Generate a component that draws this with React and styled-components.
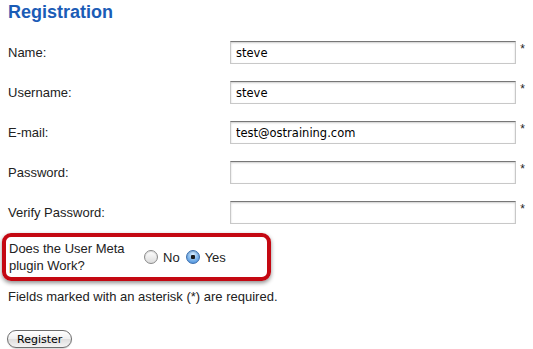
import styled, { createGlobalStyle } from "styled-components";

const Global = createGlobalStyle`
  body {
    margin: 0;
    background: #fff;
    font-family: "Liberation Sans", Arial, sans-serif;
    font-size: 13px;
    color: #222;
  }
`;

const fields = [
  { label: "Name:", value: "steve" },
  { label: "Username:", value: "steve" },
  { label: "E-mail:", value: "test@ostraining.com" },
  { label: "Password:", value: "" },
  { label: "Verify Password:", value: "" },
];

const App = () => {
  return (
    <Page>
      <Global />
      <Title>Registration</Title>
      <Rows>
        {fields.map((f) => (
          <Row key={f.label}>
            <Label>{f.label}</Label>
            <Input type="text" defaultValue={f.value} />
            <Star>*</Star>
          </Row>
        ))}
      </Rows>
      <Highlight>
        <Question>Does the User Meta plugin Work?</Question>
        <Choices>
          <Choice>
            <Radio />
            No
          </Choice>
          <Choice>
            <Radio checked />
            Yes
          </Choice>
        </Choices>
      </Highlight>
      <Note>Fields marked with an asterisk (*) are required.</Note>
      <Button>Register</Button>
    </Page>
  );
};

export default App;

const Page = styled.div`
  width: 533px;
  height: 349px;
  padding: 0 8px;
  box-sizing: border-box;
  overflow: hidden;
`;

const Title = styled.h1`
  margin: 0;
  padding-top: 2px;
  height: 29px;
  font-size: 18px;
  font-weight: bold;
  color: #1b5cb6;
`;

const Rows = styled.div`
  display: flex;
  flex-direction: column;
  margin-top: 1px;
`;

const Row = styled.div`
  display: flex;
  align-items: center;
  height: 40px;
`;

const Label = styled.div`
  width: 222px;
  flex: none;
`;

const Input = styled.input`
  width: 290px;
  height: 23px;
  box-sizing: border-box;
  margin: 0;
  padding: 2px 5px 0;
  border: 1px solid #c8c8c8;
  border-top-color: #777;
  box-shadow: inset 0 1px 2px rgba(0, 0, 0, 0.2);
  font-family: "DejaVu Sans", Verdana, sans-serif;
  font-size: 11.5px;
  color: #000;
  background: #fff;
  outline: none;
`;

const Star = styled.span`
  margin-left: 4px;
  margin-top: -6px;
  font-size: 12px;
  color: #222;
`;

const Highlight = styled.div`
  display: flex;
  align-items: center;
  width: 269px;
  height: 48px;
  margin: 1px 0 0 -6px;
  padding: 0 0 0 3px;
  box-sizing: border-box;
  border: 4px solid #c40812;
  border-radius: 9px;
  box-shadow: 0 2px 4px rgba(0, 0, 0, 0.45);
`;

const Question = styled.div`
  width: 135px;
  flex: none;
  line-height: 17px;
`;

const Choices = styled.div`
  display: flex;
  align-items: center;
  gap: 6px;
`;

const Choice = styled.label`
  display: flex;
  align-items: center;
  gap: 5px;
`;

const Radio = styled.span`
  display: inline-block;
  width: 14px;
  height: 14px;
  box-sizing: border-box;
  border-radius: 50%;
  border: 1px solid ${(p) => (p.checked ? "#3b6fae" : "#8a8a8a")};
  background: ${(p) =>
    p.checked
      ? "radial-gradient(circle, #1a1a1a 0 2px, transparent 2.5px), radial-gradient(circle at 50% 30%, #d6ecff 0, #74aee8 60%, #3a82d6 100%)"
      : "linear-gradient(#ffffff, #dcdcdc)"};
  box-shadow: inset 0 1px 1px rgba(0, 0, 0, 0.15);
`;

const Note = styled.p`
  margin: 8px 0 0;
`;

const Button = styled.button`
  margin-top: 26px;
  margin-left: -1px;
  height: 18px;
  padding: 0 9px;
  border: 1px solid #6e6e6e;
  border-radius: 9px;
  background: linear-gradient(#ffffff, #f0f0f0 50%, #dedede 51%, #f4f4f4);
  font-family: "DejaVu Sans", Verdana, sans-serif;
  font-size: 11px;
  color: #000;
  box-shadow: 0 1px 1px rgba(0, 0, 0, 0.15);
`;
